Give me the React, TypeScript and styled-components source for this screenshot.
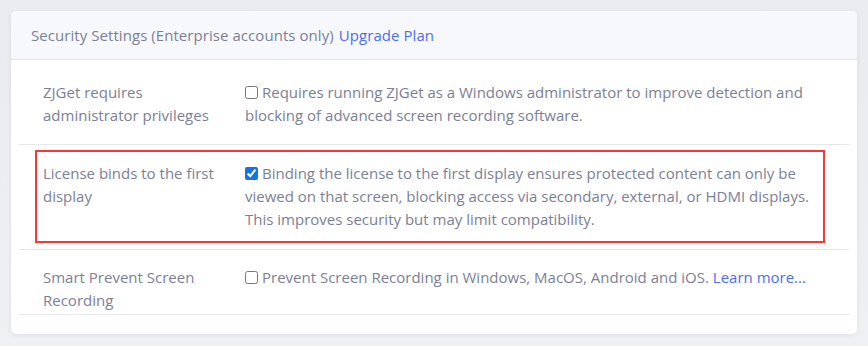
import React from "react";
import styled, { createGlobalStyle } from "styled-components";

const GlobalStyle = createGlobalStyle`
  html, body { margin: 0; padding: 0; background: #eceef2; }
  body { font-family: "Open Sans", "Noto Sans", sans-serif; }
  * { box-sizing: border-box; }
`;

const Page = styled.div`
  padding: 11px 11px 12px 11px;
  width: 868px;
  height: 346px;
  background: linear-gradient(180deg, #eaebef 0%, #eef0f4 100%);
`;

const Card = styled.div`
  background: #ffffff;
  border-radius: 5px;
  box-shadow: 0 1px 4px rgba(40, 45, 70, 0.08);
  overflow: hidden;
`;

const CardHeader = styled.div`
  height: 49px;
  display: flex;
  align-items: center;
  padding: 0 20px;
  background: #f7f8fc;
  border-bottom: 1px solid #e3e5ee;
  font-size: 15px;
  letter-spacing: 0.06px;
  color: #7b8097;
`;

const Link = styled.a`
  color: #4b6ef0;
  text-decoration: none;
`;

const HeaderLink = styled(Link)`
  margin-left: 5px;
`;

const CardBody = styled.div`
  padding: 0 8px 19px 8px;
`;

const Row = styled.div<{ $pad: string }>`
  padding: ${(p) => p.$pad};
  border-bottom: 1px solid #e6e7ef;
`;

const Highlight = styled.div<{ $on?: boolean }>`
  border: ${(p) => (p.$on ? "2px solid #f5383c" : "none")};
  padding: ${(p) => (p.$on ? "10px 6px 10px 6px" : "0")};
  margin-right: ${(p) => (p.$on ? "24px" : "0")};
  display: grid;
  grid-template-columns: 202px 572px;
  font-size: 15px;
  line-height: 23px;
  color: #7b8097;
`;

const Label = styled.div`
  padding-right: 16px;
`;

const Value = styled.div``;

const Check = styled.input`
  width: 13px;
  height: 13px;
  margin: 0 4px 0 0;
  vertical-align: -1px;
  accent-color: #1473e6;
`;

const rows = [
  {
    label: "ZJGet requires administrator privileges",
    text: "Requires running ZJGet as a Windows administrator to improve detection and blocking of advanced screen recording software.",
    checked: false,
    pad: "21px 24px 17px 24px",
    hl: false,
  },
  {
    label: "License binds to the first display",
    text: "Binding the license to the first display ensures protected content can only be viewed on that screen, blocking access via secondary, external, or HDMI displays. This improves security but may limit compatibility.",
    checked: true,
    pad: "5px 0 6px 16px",
    hl: true,
  },
  {
    label: "Smart Prevent Screen Recording",
    text: "Prevent Screen Recording in Windows, MacOS, Android and iOS.",
    checked: false,
    pad: "16px 24px 2px 24px",
    hl: false,
    more: true,
  },
];

export default function App() {
  return (
    <>
      <GlobalStyle />
      <Page>
        <Card>
          <CardHeader>
            Security Settings (Enterprise accounts only)
            <HeaderLink href="#">Upgrade Plan</HeaderLink>
          </CardHeader>
          <CardBody>
            {rows.map((r) => (
              <Row key={r.label} $pad={r.pad}>
                <Highlight $on={r.hl}>
                  <Label>{r.label}</Label>
                  <Value>
                    <Check type="checkbox" defaultChecked={r.checked} />
                    {r.text}
                    {r.more && (
                      <>
                        {" "}
                        <Link href="#">Learn more...</Link>
                      </>
                    )}
                  </Value>
                </Highlight>
              </Row>
            ))}
          </CardBody>
        </Card>
      </Page>
    </>
  );
}
